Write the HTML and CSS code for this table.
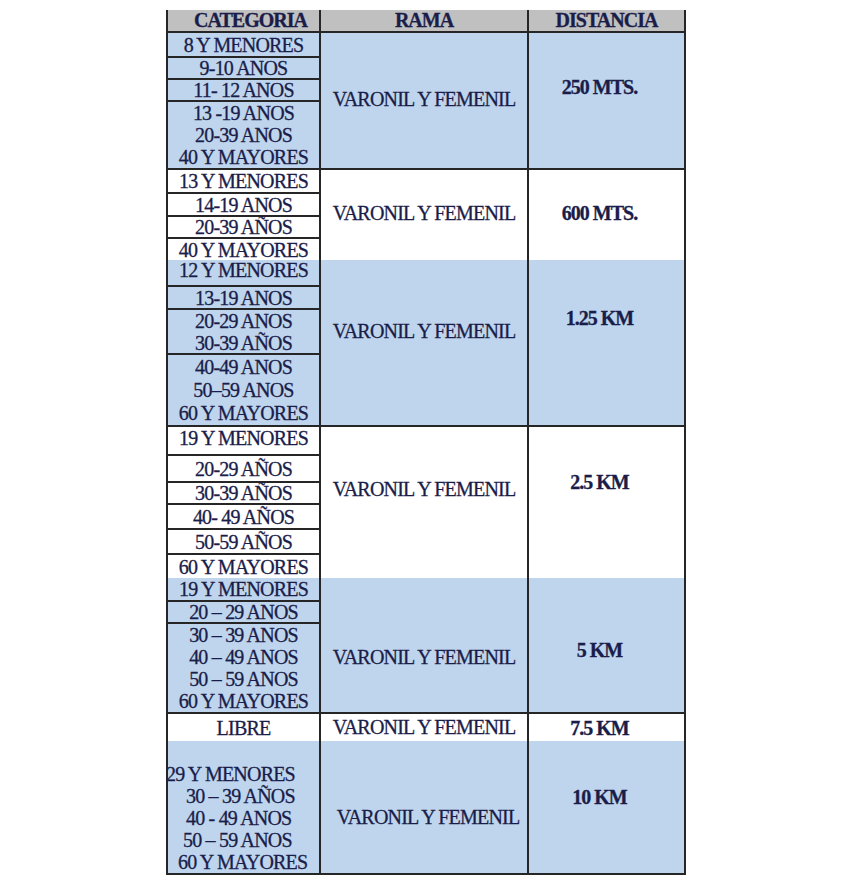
FILE: index.html
```html
<!DOCTYPE html>
<html lang="es">
<head>
<meta charset="utf-8">
<title>Categorías</title>
<link rel="stylesheet" href="styles.css">
</head>
<body>
<div class="sheet">
  <div class="hdr">
    <div class="h-cat">CATEGORIA</div>
    <div class="h-rama">RAMA</div>
    <div class="h-dist">DISTANCIA</div>
  </div>

  <div class="grp blue sep g1">
    <div class="cats">
      <div class="cell ln">8 Y MENORES</div>
      <div class="cell ln">9-10 ANOS</div>
      <div class="cell ln">11- 12 ANOS</div>
      <div class="cell">13 -19 ANOS</div>
      <div class="cell">20-39 ANOS</div>
      <div class="cell">40 Y MAYORES</div>
    </div>
    <div class="rama">VARONIL Y FEMENIL</div>
    <div class="dist">250 MTS.</div>
  </div>

  <div class="grp g2">
    <div class="cats">
      <div class="cell ln">13 Y MENORES</div>
      <div class="cell ln">14-19 ANOS</div>
      <div class="cell ln">20-39 AÑOS</div>
      <div class="cell">40 Y MAYORES</div>
    </div>
    <div class="rama">VARONIL Y FEMENIL</div>
    <div class="dist">600 MTS.</div>
  </div>

  <div class="grp blue sep g3">
    <div class="cats">
      <div class="cell ln hi">12 Y MENORES</div>
      <div class="cell ln">13-19 ANOS</div>
      <div class="cell">20-29 ANOS</div>
      <div class="cell ln">30-39 AÑOS</div>
      <div class="cell">40-49 ANOS</div>
      <div class="cell">50–59 ANOS</div>
      <div class="cell">60 Y MAYORES</div>
    </div>
    <div class="rama">VARONIL Y FEMENIL</div>
    <div class="dist">1.25 KM</div>
  </div>

  <div class="grp g4">
    <div class="cats">
      <div class="cell ln hi">19 Y MENORES</div>
      <div class="cell ln">20-29 AÑOS</div>
      <div class="cell ln">30-39 AÑOS</div>
      <div class="cell ln">40- 49 AÑOS</div>
      <div class="cell ln">50-59 AÑOS</div>
      <div class="cell">60 Y MAYORES</div>
    </div>
    <div class="rama">VARONIL Y FEMENIL</div>
    <div class="dist">2.5 KM</div>
  </div>

  <div class="grp blue sep g5">
    <div class="cats">
      <div class="cell ln">19 Y MENORES</div>
      <div class="cell ln">20 – 29 ANOS</div>
      <div class="cell">30 – 39 ANOS</div>
      <div class="cell">40 – 49 ANOS</div>
      <div class="cell">50 – 59 ANOS</div>
      <div class="cell">60 Y MAYORES</div>
    </div>
    <div class="rama">VARONIL Y FEMENIL</div>
    <div class="dist">5 KM</div>
  </div>

  <div class="grp g6">
    <div class="cats">
      <div class="cell">LIBRE</div>
    </div>
    <div class="rama">VARONIL Y FEMENIL</div>
    <div class="dist">7.5 KM</div>
  </div>

  <div class="grp blue g7">
    <div class="cats list">
      <div class="li l1">29 Y MENORES</div>
      <div class="li l2">30 – 39 AÑOS</div>
      <div class="li l3">40 - 49 ANOS</div>
      <div class="li l4">50 – 59 ANOS</div>
      <div class="li l5">60 Y MAYORES</div>
    </div>
    <div class="rama">VARONIL Y FEMENIL</div>
    <div class="dist">10 KM</div>
  </div>
</div>
</body>
</html>
```

FILE: styles.css
```css
* {
  box-sizing: border-box;
}

body {
  margin: 0;
  background: #ffffff;
  font-family: "Liberation Serif", "Times New Roman", serif;
  font-size: 20px;
  letter-spacing: -0.8px;
  color: #1a1d4a;
  -webkit-text-stroke: 0.3px #1a1d4a;
}

.sheet {
  width: 520px;
  margin: 10px 0 0 166px;
  border-left: 2px solid #262626;
  border-right: 2px solid #262626;
  border-bottom: 2px solid #262626;
}

.hdr {
  display: grid;
  grid-template-columns: 153px 208px 155px;
  height: 23px;
  background: #c0c0c0;
  border-bottom: 2px solid #262626;
  font-weight: bold;
  letter-spacing: -1px;
}

.hdr > div {
  display: flex;
  align-items: center;
  justify-content: center;
  line-height: 21px;
}

.h-cat {
  border-right: 2px solid #262626;
  padding-left: 14px;
}

.h-rama {
  border-right: 2px solid #262626;
}

.grp {
  display: grid;
  grid-template-columns: 153px 208px 155px;
}

.blue {
  background: #bed5ed;
}

.sep {
  border-bottom: 2px solid #262626;
}

.cats {
  display: grid;
  border-right: 2px solid #262626;
}

.cell {
  display: flex;
  align-items: center;
  justify-content: center;
  line-height: 22px;
  white-space: nowrap;
}

.cell.hi {
  padding-bottom: 6px;
}

.ln {
  border-bottom: 2px solid #262626;
}

.rama {
  border-right: 2px solid #262626;
  text-align: center;
  line-height: 22px;
  white-space: nowrap;
}

.dist {
  text-align: center;
  font-weight: bold;
  letter-spacing: -1px;
  line-height: 22px;
  padding-right: 14px;
  white-space: nowrap;
}

.g1 .cats { grid-template-rows: 25px 22px 22px 22px 22px 22px; }
.g2 .cats { grid-template-rows: 24px 23px 22px 21px; }
.g3 .cats { grid-template-rows: 27px 23px 22px 23px 23px 23px 24px; }
.g4 .cats { grid-template-rows: 29px 27px 22px 25px 25px 23px; }
.g5 .cats { grid-template-rows: 24px 22px 22px 22px 22px 22px; }
.g6 .cats { grid-template-rows: 27px; }

.g1 .rama { padding-top: 55px; }
.g2 .rama { padding-top: 32px; }
.g3 .rama { padding-top: 60px; }
.g4 .rama { padding-top: 51px; }
.g5 .rama { padding-top: 68px; }
.g6 .rama { padding-top: 2px; }
.g7 .rama { padding-top: 65px; padding-left: 8px; }

.g1 .dist { padding-top: 43px; }
.g2 .dist { padding-top: 32px; }
.g3 .dist { padding-top: 47px; }
.g4 .dist { padding-top: 44px; }
.g5 .dist { padding-top: 61px; }
.g6 .dist { padding-top: 3px; }
.g7 .dist { padding-top: 45px; }

.list {
  display: block;
  height: 132px;
  padding-top: 22px;
}

.li {
  line-height: 22px;
  white-space: nowrap;
}

.l1 { padding-left: 0; margin-left: -2px; }
.l2 { padding-left: 18px; }
.l3 { padding-left: 18px; }
.l4 { padding-left: 15px; }
.l5 { padding-left: 10px; }
```
